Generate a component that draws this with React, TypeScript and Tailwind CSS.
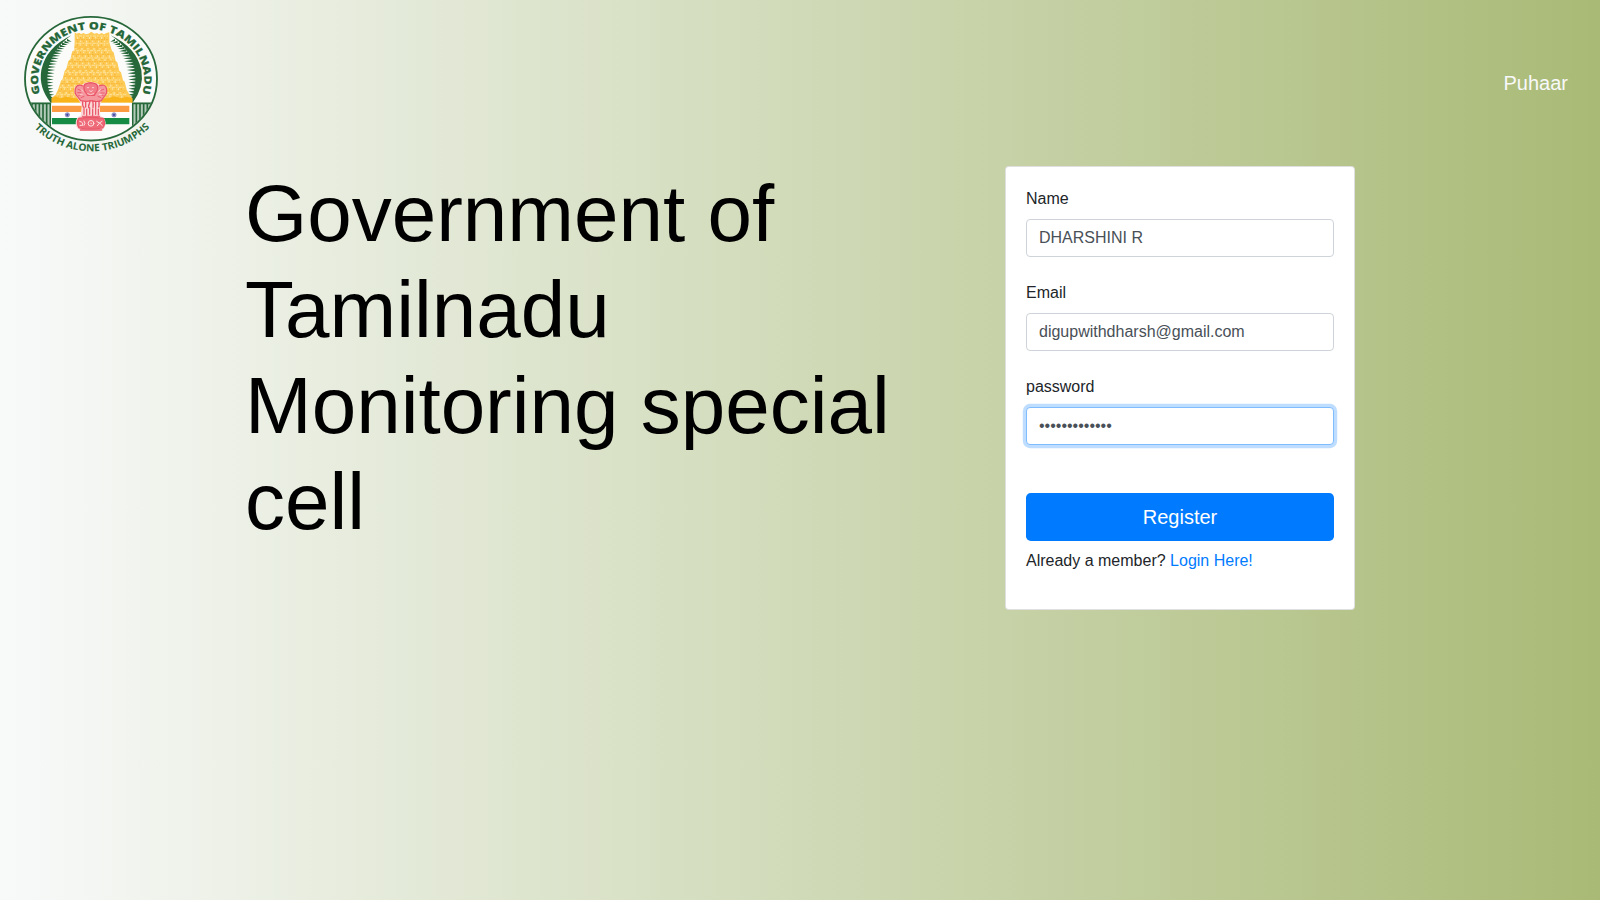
import React from "react";

const GREEN = "#27683a";

/* Radiating strokes on the inner side of each crescent */
function Rays({ side }: { side: 1 | -1 }) {
  const rays = [];
  for (let i = 0; i < 23; i++) {
    const a = ((-58 + i * 3.9) * Math.PI) / 180;
    const rx = 136;
    const x1 = 243 + side * rx * Math.cos(a);
    const y1 = 222 + 138 * Math.sin(a);
    const x2 = x1 - side * (14 + 12 * Math.sin((Math.PI * i) / 22));
    const y2 = y1 + (i < 10 ? 5 - i / 2 : 0);
    rays.push(
      <path key={i} d={`M${x1} ${y1 - 4}L${x2} ${y2}L${x1} ${y1 + 4}Z`} fill={GREEN} />,
    );
  }
  return <g>{rays}</g>;
}

/* Horizontal tiers of the temple tower with their carved niches */
function Tower() {
  const marks = [];
  for (let row = 0; row < 17; row++) {
    const y = 93 + row * 11;
    const half = y < 112 ? 48 : 48 + (y - 112) * 0.36;
    marks.push(
      <path
        key={`l${row}`}
        d={`M${246 - half} ${y}H${246 + half}`}
        stroke={row % 2 ? "#f7b02c" : "#ffedbd"}
        strokeWidth={row % 2 ? 2.4 : 2}
        strokeDasharray={row % 2 ? "7 2 3 3" : "5 4 9 3"}
      />,
    );
    for (let x = -half + 5; x < half - 5; x += 9) {
      const j = (row * 7 + Math.round(x + 200) * 3) % 4;
      marks.push(
        <path
          key={`${row}-${x}`}
          d={`M${246 + x} ${y + 3}v${3 + j}`}
          stroke={j % 2 ? "#fff0c8" : "#f6ad28"}
          strokeWidth="2.4"
        />,
      );
    }
  }
  return (
    <g fill="none">
      <path
        d="M194 82l6 4 7-3 6 4 8-3 6 4 8-2 9-6 9 6 8-2 6 4 8-4 7 4 7-4 9-2V112L306 138L311 142L317 168L322 172L328 197L333 202L339 226L344 230L350 254L358 268L367 280V293H125V278l12-9 8-18 8-24 5-5 6-25 5-5 6-24 6-5 6-24 6-3 1-27z"
        fill="#fdcb58"
      />
      {marks}
      <path d="M125 293v-13l12-6 14 6 18-5 24 5h100l22-6 18 6 18-5 16 5v13z" fill="#f9b41b" />
    </g>
  );
}

/* Lion capital with its abacus and bell-shaped base */
function Lions() {
  return (
    <g fill="none" strokeLinecap="round" strokeLinejoin="round">
      <path
        d="M222 235q20-8 40 0l8 6q14-5 19 7 6 16-3 26l-11 14-6 14 2 31q14 4 16 20 0 20-17 22h-56q-17-3-17-22 1-16 15-21l3-30-7-14-10-14q-8-11-4-25 5-14 20-8z"
        fill="#fad9d8"
      />
      <g stroke="#ea5567" strokeWidth="3.6">
        <path d="M225 238q17-9 34 0 7 8 2 20l-8 13h-20l-9-13q-5-12 1-20z" fill="#f17d88" />
        <path d="M219 243q-16-7-22 6-5 15 4 24l11 14q20 4 30 0 20 5 32 0l10-14q9-9 5-24-4-13-21-7" fill="#f4979e" />
        <path d="M225 238q17-9 34 0 7 8 2 20l-8 13h-20l-9-13q-5-12 1-20z" fill="#f17d88" />
        <path d="M204 253l8 3m-9 7h10m-7 9l10-4m-3 10l9-4M281 253l-8 3m10 8h-10m7 8l-10-4m3 10l-9-4" strokeWidth="2.6" />
        <path d="M218 290q-1 10 2 16M227 290v16M236 300v8M240 288l-3 12M248 288l2 12M249 300v8M257 290v16M267 290q1 10-1 16" strokeWidth="4" />
        <path d="M222 306v22m8-16v20m9-24v20m9-16v20m9-24v20m8-16v18" strokeWidth="3.6" />
        <path d="M217 334h52" strokeWidth="3" />
        <path d="M206 340q36-6 74 0 8 17-2 29-37 6-71 0-9-15-1-29z" fill="#ee6a78" />
        <path d="M211 375h64" strokeWidth="4" />
      </g>
      <g stroke="#fdeceb" strokeWidth="2.8">
        <path d="M232 248h4m11 0h4M239 257l4 3 4-3M233 266l9 3 9-3M214 254l5 5m52-5l-5 5M210 269l7-1m51 0l7 1" strokeWidth="2.2" />
        <circle cx="243" cy="355" r="8.5" />
        <path d="M209 349l7 3m-6 9h8v-6m4-7l3 7-3 6M260 349l8 5 8-5m-14 13l7-8 8 8" />
        <circle cx="243" cy="355" r="2" strokeWidth="1" />
      </g>
    </g>
  );
}

function Chakra({ cx }: { cx: number }) {
  return (
    <g stroke="#484da0" strokeWidth="1.4">
      <circle cx={cx} cy="329.500" r="6.500" fill="#c5c6e3" />
      <path d={`M${cx - 6} 329.500h12M${cx} 323.500v12M${cx - 4} 325.500l8 8M${cx + 4} 325.500l-8 8`} />
      <circle cx={cx} cy="329.500" r="2.500" fill="#3c4098" />
    </g>
  );
}

function Emblem() {
  return (
    <svg viewBox="0 0 480 465" className="block h-[155px] w-[160px]" role="img" aria-label="Government of Tamilnadu">
      <defs>
        <clipPath id="disc">
          <ellipse cx="243" cy="221" rx="196" ry="183" />
        </clipPath>
        <path id="arc-top" d="M93 273A159 151 0 1 1 394 273" />
        <path id="arc-bottom" d="M71 367A246 246 0 0 0 421 365" />
      </defs>
      <ellipse cx="243" cy="221" rx="198" ry="185.500" fill="#fbfcfa" />
      <g clipPath="url(#disc)">
        <path d="M40 293h82v92H40zM367 293h80v92h-80z" fill="#b4cbba" />
        <path d="M40 295h84M366 295h80" stroke={GREEN} strokeWidth="5" />
        <path
          d="M66 296v80M77 296v80M88 296v80M99 296v80M110 296v86M121 296v88M368 296v88M379 296v86M390 296v80M401 296v80M412 296v80M423 296v80"
          stroke={GREEN}
          strokeWidth="5"
        />
        <path d="M124 348L160 386H124zM365 348L324 386H365z" fill="#fbfcfa" />
      </g>
      <path d="M184 91Q108 128 94 195Q85 247 122 293H131Q103 243 115 190Q130 128 184 91z" fill={GREEN} />
      <path d="M302 91Q380 128 394 195Q403 247 368 293H359Q385 243 373 190Q358 128 302 91z" fill={GREEN} />
      <Rays side={-1} />
      <Rays side={1} />
      <Tower />
      <path d="M124 293H365V360H124z" fill="#fff" />
      <path d="M126 302H358V321H126z" fill="#fb9b43" />
      <path d="M126 339H358V358H126z" fill="#168b43" />
      <Chakra cx={172} />
      <Chakra cx={312} />
      <Lions />
      <ellipse cx="243" cy="221" rx="198" ry="185.500" fill="none" stroke={GREEN} strokeWidth="5.500" />
      <g fill={GREEN} stroke={GREEN} fontFamily="'Open Sans', 'Noto Sans', sans-serif" textAnchor="middle">
        <text fontSize="31" fontWeight="800" strokeWidth="0.4">
          <textPath href="#arc-top" startOffset="50%" textLength="572" lengthAdjust="spacingAndGlyphs">
            GOVERNMENT OF TAMILNADU
          </textPath>
        </text>
        <text fontSize="30" fontWeight="700" strokeWidth="0">
          <textPath href="#arc-bottom" startOffset="50%" textLength="384" lengthAdjust="spacingAndGlyphs">
            TRUTH ALONE TRIUMPHS
          </textPath>
        </text>
      </g>
    </svg>
  );
}

const inputBase =
  "block h-[38px] w-full rounded border bg-white px-3 py-1.5 text-base leading-6 text-[#495057] outline-none";

type FieldProps = { id: string; label: string; type: string; value: string; focused?: boolean };

function Field({ id, label, type, value, focused }: FieldProps) {
  return (
    <div className="mb-6">
      <label htmlFor={id} className="mb-2 block">
        {label}
      </label>
      <input
        id={id}
        type={type}
        defaultValue={value}
        className={
          focused
            ? `${inputBase} border-[#80bdff] shadow-[0_0_0_3.2px_rgba(0,123,255,0.25)]`
            : `${inputBase} border-[#ced4da]`
        }
      />
    </div>
  );
}

export default function App() {
  return (
    <div className="min-h-screen bg-[linear-gradient(to_right,#f8fafa,#a9ba76)] font-['Liberation_Sans',Arial,sans-serif] text-base text-[#212529]">
      <nav className="flex h-[166px] items-start justify-between pt-[5px] pr-8 pl-2.5">
        <Emblem />
        <a href="#" className="mt-[63px] text-xl leading-[30px] text-[#f8f9fa]">
          Puhaar
        </a>
      </nav>
      <main className="mx-auto flex w-[1110px] items-start justify-between">
        <h1 className="w-[730px] text-[80px] leading-[96px] text-black">
          Government of Tamilnadu Monitoring special cell
        </h1>
        <form className="w-[350px] rounded border border-black/[.125] bg-white bg-clip-border p-5 pb-9">
          <Field id="name" label="Name" type="text" value="DHARSHINI R" />
          <Field id="email" label="Email" type="text" value="digupwithdharsh@gmail.com" />
          <Field id="password" label="password" type="password" value="passwordabcde" focused />
          <button type="button" className="mt-12 mb-2 block h-12 w-full rounded-[4.8px] bg-[#007bff] text-xl leading-[30px] text-white">
            Register
          </button>
          <p>
            Already a member?{" "}
            <a href="#" className="text-[#007bff]">
              Login Here!
            </a>
          </p>
        </form>
      </main>
    </div>
  );
}
